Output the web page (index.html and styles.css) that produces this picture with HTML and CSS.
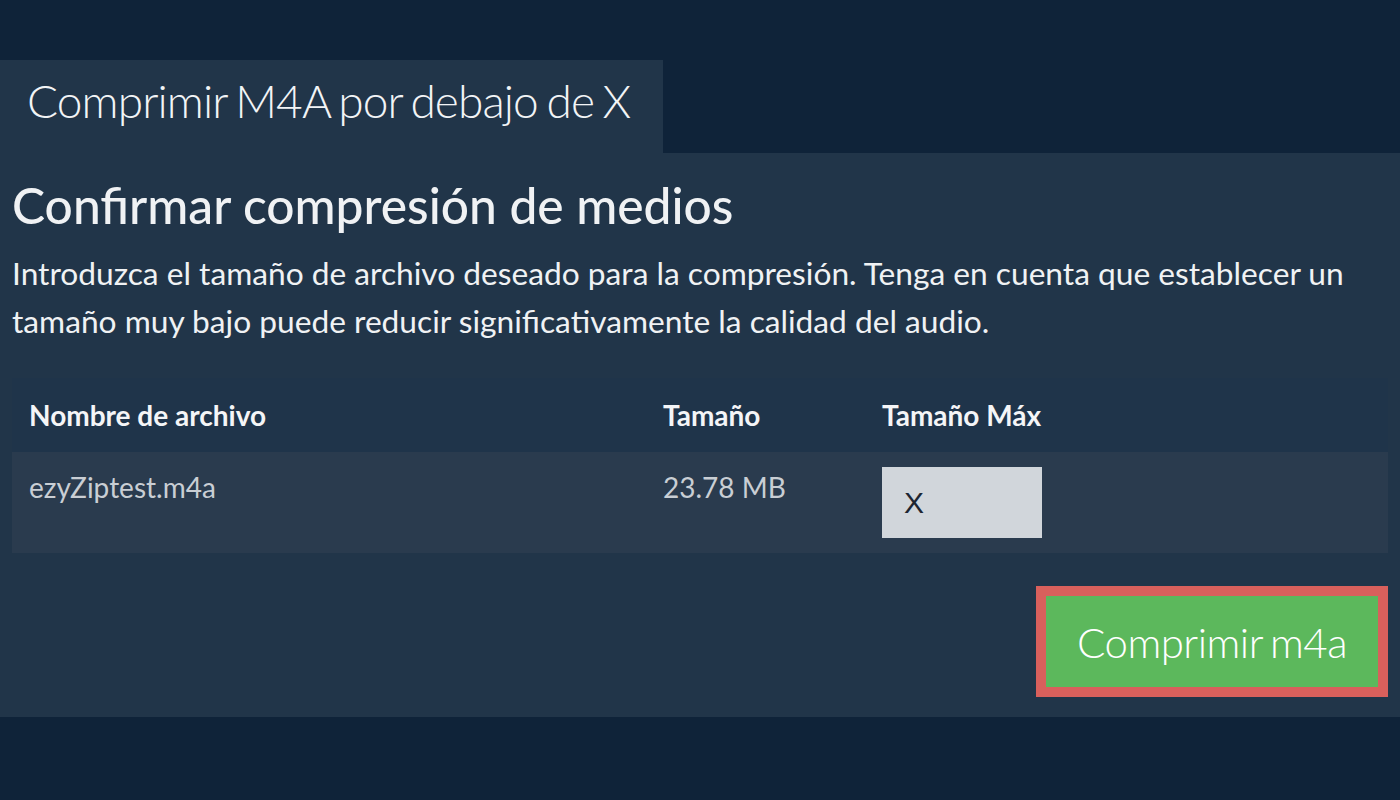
FILE: index.html
```html
<!DOCTYPE html>
<html lang="es">
<head>
    <meta charset="UTF-8">
    <meta name="viewport" content="width=device-width, initial-scale=1.0">
    <title>Comprimir M4A por debajo de X</title>
    <link rel="stylesheet" href="styles.css">
</head>
<body>
    <div class="tab">Comprimir M4A por debajo de X</div>

    <div class="panel">
        <h2>Confirmar compresión de medios</h2>
        <p class="intro">Introduzca el tamaño de archivo deseado para la compresión. Tenga en cuenta que establecer un tamaño muy bajo puede reducir significativamente la calidad del audio.</p>

        <table class="files">
            <thead>
                <tr>
                    <th class="col-name">Nombre de archivo</th>
                    <th class="col-size">Tamaño</th>
                    <th class="col-max">Tamaño Máx</th>
                </tr>
            </thead>
            <tbody>
                <tr>
                    <td>ezyZiptest.m4a</td>
                    <td>23.78 MB</td>
                    <td><input type="text" class="max-input" value="X"></td>
                </tr>
            </tbody>
        </table>

        <div class="actions">
            <button class="btn">Comprimir m4a</button>
        </div>
    </div>
</body>
</html>
```

FILE: styles.css
```css
* { margin: 0; padding: 0; box-sizing: border-box; }
body { font-family: Lato, "Noto Sans", sans-serif; background: #0f2339; color: #eef0f2; padding-top: 60px; }

.tab { width: 663px; height: 93px; background: #213549; padding: 0 27px; font-size: 46px; font-weight: 300; line-height: 81px; letter-spacing: -0.9px; word-spacing: -3px; white-space: nowrap; color: #f2f4f6; }

.panel { background: #213549; padding: 19px 12px 20px; }
.panel h2 { font-size: 49.7px; font-weight: 500; line-height: 66px; color: #f0f2f4; }
.intro { font-size: 31.7px; line-height: 48px; margin-top: 11px; color: #f0f2f4; }

.files { width: 100%; border-collapse: collapse; margin-top: 33px; font-size: 28px; }
.files th { text-align: left; font-weight: 700; background: #1f344a; height: 74px; padding: 0 17px; color: #f4f5f7; vertical-align: middle; }
.files td { background: #2a3b4e; height: 101px; padding: 15px 17px; vertical-align: top; color: #c9ced4; line-height: 40px; }
.col-name { width: 634px; }
.col-size { width: 219px; }

.max-input { display: block; width: 160px; height: 71px; border: none; background: #d1d6db; padding: 0 22px; font-family: "Liberation Sans", Arial, sans-serif; font-size: 30px; color: #1d2632; }

.actions { display: flex; justify-content: flex-end; margin-top: 33px; }
.btn { background: #5cb85c; color: #fff; border: 10px solid #d9605c; width: 352px; height: 111px; font-family: Lato, "Noto Sans", sans-serif; font-size: 42px; font-weight: 300; letter-spacing: -0.5px; word-spacing: -3px; cursor: pointer; }
```
